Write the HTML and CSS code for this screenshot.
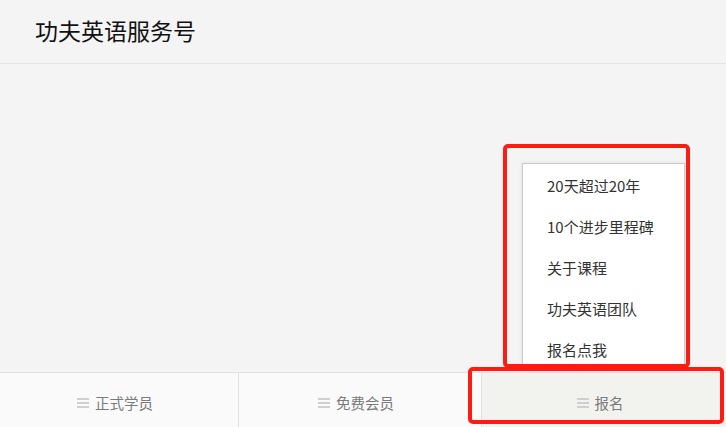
FILE: index.html
```html
<!DOCTYPE html>
<html lang="zh-CN">
<head>
<meta charset="utf-8">
<title>功夫英语服务号</title>
<link rel="stylesheet" href="styles.css">
</head>
<body>
<div class="app">
  <header class="header">
    <h1 class="title">功夫英语服务号</h1>
  </header>
  <main class="content"></main>
  <nav class="tabbar">
    <div class="tab">
      <svg class="tab-icon" width="12" height="10" viewBox="0 0 12 10"><rect y="0" width="12" height="2" fill="#cfcfcf"/><rect y="4" width="12" height="2" fill="#cfcfcf"/><rect y="8" width="12" height="2" fill="#cfcfcf"/></svg>
      <span>正式学员</span>
    </div>
    <div class="tab">
      <svg class="tab-icon" width="12" height="10" viewBox="0 0 12 10"><rect y="0" width="12" height="2" fill="#cfcfcf"/><rect y="4" width="12" height="2" fill="#cfcfcf"/><rect y="8" width="12" height="2" fill="#cfcfcf"/></svg>
      <span>免费会员</span>
    </div>
    <div class="tab tab-active">
      <svg class="tab-icon" width="12" height="10" viewBox="0 0 12 10"><rect y="0" width="12" height="2" fill="#cfcfcf"/><rect y="4" width="12" height="2" fill="#cfcfcf"/><rect y="8" width="12" height="2" fill="#cfcfcf"/></svg>
      <span>报名</span>
    </div>
  </nav>
  <ul class="submenu">
    <li class="submenu-item">20天超过20年</li>
    <li class="submenu-item">10个进步里程碑</li>
    <li class="submenu-item">关于课程</li>
    <li class="submenu-item">功夫英语团队</li>
    <li class="submenu-item">报名点我</li>
  </ul>
  <div class="mark mark-menu"></div>
  <div class="mark mark-tab"></div>
</div>
</body>
</html>
```

FILE: styles.css
```css
* { box-sizing: border-box; }
html, body {
  margin: 0;
  padding: 0;
  width: 726px;
  height: 427px;
  overflow: hidden;
  background: #f4f4f4;
  font-family: "Noto Sans CJK SC", "Microsoft YaHei", sans-serif;
}
.app {
  position: relative;
  width: 726px;
  height: 427px;
  display: flex;
  flex-direction: column;
}
.header {
  height: 64px;
  border-bottom: 1px solid #e3e3e3;
  display: flex;
  align-items: center;
  padding-left: 35px;
  flex: none;
}
.title {
  margin: 0;
  font-size: 23px;
  font-weight: normal;
  color: #111;
  line-height: 1;
  position: relative;
  top: -1px;
}
.content {
  flex: 1;
}
.tabbar {
  flex: none;
  height: 55px;
  border-top: 1px solid #e2e2e2;
  background: #fafafa;
  display: flex;
}
.tab {
  display: flex;
  align-items: center;
  justify-content: center;
  gap: 6px;
  font-size: 14.5px;
  color: #7a7a7a;
  padding-top: 5px;
  padding-right: 8px;
}
.tab:nth-child(1) { width: 238px; }
.tab:nth-child(2) { width: 243px; border-left: 1px solid #e2e2e2; }
.tab:nth-child(3) { flex: 1; border-left: 1px solid #e2e2e2; }
.tab-active {
  background: #f2f2ee;
}
.tab-icon { display: block; }
.submenu {
  position: absolute;
  left: 522px;
  top: 163px;
  width: 163px;
  height: 207px;
  margin: 0;
  padding: 1px 0 0 0;
  list-style: none;
  background: #fff;
  border: 1px solid #c9c9c9;
  border-bottom: none;
  box-shadow: 0 0 4px rgba(0,0,0,0.08);
}
.submenu-item {
  height: 41px;
  line-height: 41px;
  padding-left: 24px;
  font-size: 15px;
  color: #333;
}
.mark {
  position: absolute;
  border: 4px solid #ff1a12;
  border-radius: 5px;
}
.mark-menu {
  left: 503px;
  top: 144px;
  width: 187px;
  height: 224px;
}
.mark-tab {
  left: 468px;
  top: 367px;
  width: 256px;
  height: 57px;
}
```
